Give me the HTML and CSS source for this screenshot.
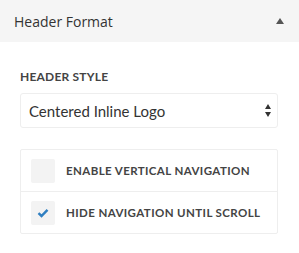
FILE: index.html
```html
<!DOCTYPE html>
<html lang="en">
<head>
    <meta charset="UTF-8">
    <title>Header Format</title>
    <link rel="stylesheet" href="styles.css">
</head>
<body>
    <section class="panel">
        <header class="panel-head">
            <h2>Header Format</h2>
            <svg class="toggle" width="8" height="6" viewBox="0 0 8 6"><path d="M4 0 L8 6 H0 Z" fill="#555"/></svg>
        </header>

        <div class="panel-body">
            <label class="field-label" for="header-style">Header Style</label>
            <div class="select">
                <span>Centered Inline Logo</span>
                <svg width="6" height="13" viewBox="0 0 6 13"><path d="M3 0 L6 5 H0 Z M3 13 L6 8 H0 Z" fill="#333"/></svg>
            </div>

            <ul class="checks">
                <li>
                    <span class="box"></span>
                    <span class="check-label">Enable Vertical Navigation</span>
                </li>
                <li>
                    <span class="box">
                        <svg width="12" height="10" viewBox="0 0 12 10"><path d="M1.5 5.2 L4.5 8 L10.5 1.8" fill="none" stroke="#2f7fc1" stroke-width="2.4"/></svg>
                    </span>
                    <span class="check-label">Hide Navigation Until Scroll</span>
                </li>
            </ul>
        </div>
    </section>
</body>
</html>
```

FILE: styles.css
```css
body {
    margin: 0;
    background: #fff;
    font-family: "Open Sans", sans-serif;
    color: #333;
}
.panel-head {
    height: 42px;
    background: #f5f5f5;
    display: flex;
    align-items: center;
    justify-content: space-between;
    padding: 0 15px 0 14px;
}
.panel-head h2 {
    margin: 0;
    font-size: 14px;
    font-weight: 400;
    color: #333;
}
.toggle {
    margin-top: -1px;
}
.panel-body {
    padding: 27px 21px 0 20px;
}
.field-label {
    display: block;
    font-family: Lato, sans-serif;
    font-size: 12px;
    font-weight: 700;
    letter-spacing: 0.2px;
    color: #444;
    text-transform: uppercase;
    margin-bottom: 9px;
}
.select {
    height: 33px;
    border: 1px solid #eee;
    border-radius: 3px;
    display: flex;
    align-items: center;
    justify-content: space-between;
    padding: 0 6px 0 8px;
    font-family: Lato, sans-serif;
    font-size: 15px;
    color: #333;
}
.checks {
    list-style: none;
    margin: 21px 0 0;
    padding: 0;
    border: 1px solid #eee;
    border-radius: 2px;
}
.checks li {
    height: 41px;
    display: flex;
    align-items: center;
    padding-left: 10px;
}
.checks li + li {
    border-top: 1px solid #eee;
}
.box {
    width: 24px;
    height: 24px;
    background: #f3f3f3;
    border-radius: 2px;
    display: flex;
    align-items: center;
    justify-content: center;
    margin-right: 11px;
}
.check-label {
    font-family: Lato, sans-serif;
    font-size: 11.5px;
    font-weight: 700;
    letter-spacing: 0.4px;
    color: #444;
    text-transform: uppercase;
}
```
